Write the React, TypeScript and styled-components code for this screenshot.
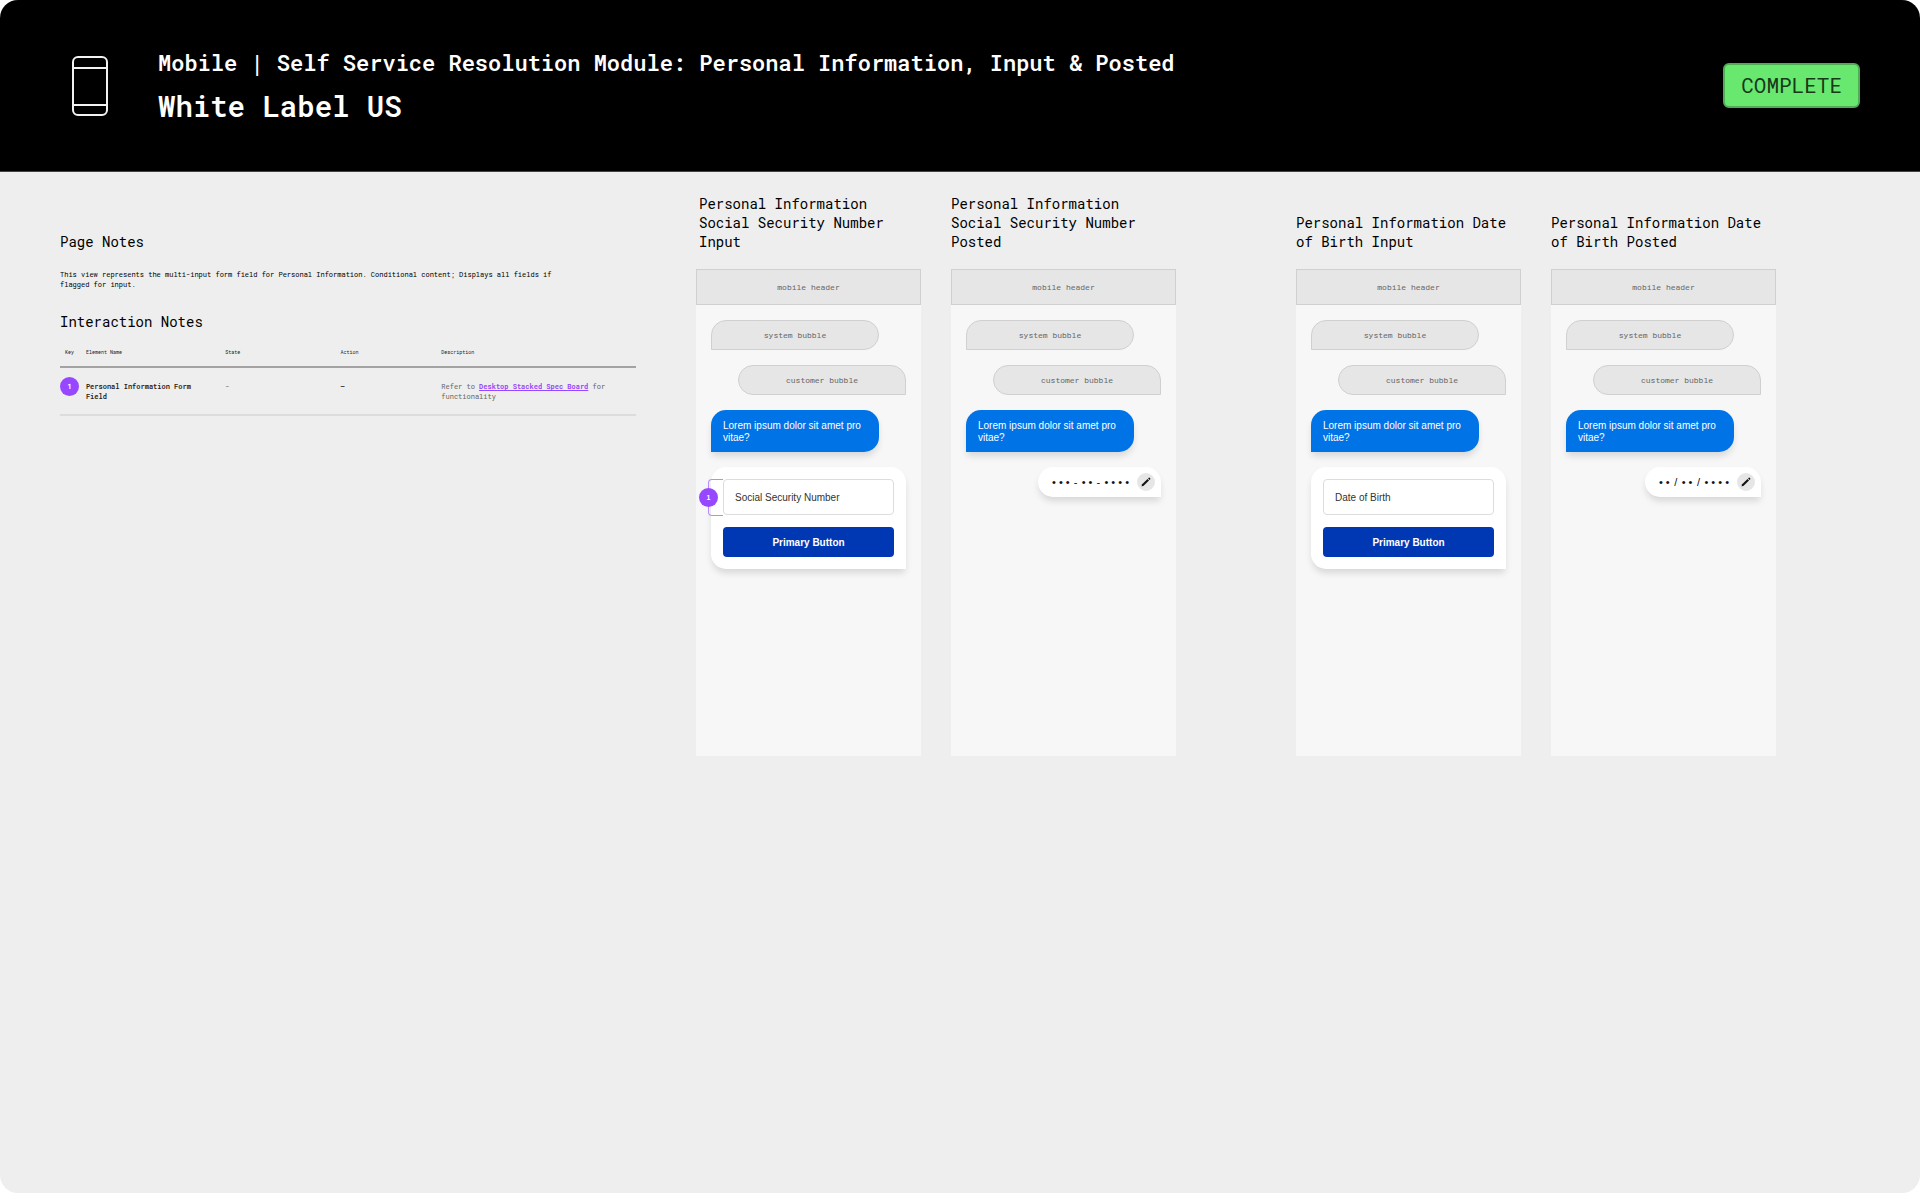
import React from "react";
import styled, { createGlobalStyle, css } from "styled-components";

const mono = `"Roboto Mono", "DejaVu Sans Mono", "Liberation Mono", monospace`;
const sans = `"Liberation Sans", Arial, sans-serif`;

const color = {
  board: "#eeeeee",
  ink: "#000000",
  purple: "#9747ff",
  purpleSoft: "#b98aff",
  wire: "#e6e6e6",
  wireBorder: "#d0d0d0",
  wireText: "#666666",
  screen: "#f7f7f7",
  blue: "#0073e6",
  navy: "#0038b3",
};

const GlobalStyle = createGlobalStyle`
  *, *::before, *::after { box-sizing: border-box; }
  body { margin: 0; background: #ffffff; font-family: ${mono}; color: ${color.ink}; }
  h1, h2, h3, p { margin: 0; font-weight: 400; }
`;

const Board = styled.div`
  display: flex;
  flex-direction: column;
  min-height: 100vh;
  border-radius: 18px;
  overflow: hidden;
  background: ${color.board};
`;

const Header = styled.header`
  display: flex;
  align-items: center;
  padding: 45px 60px;
  background: #000000;
  border-bottom: 1px solid #444444;
  color: #ffffff;
`;

const DeviceSlot = styled.div`
  display: flex;
  justify-content: center;
  width: 60px;
  margin-right: 38px;
`;

const Titles = styled.div`
  flex: 1;
  display: flex;
  flex-direction: column;
  gap: 5px;
`;

const Title = styled.p`
  font-size: 22px;
  line-height: 36px;
  font-weight: 600;
`;

const Subtitle = styled.h1`
  font-size: 29px;
  line-height: 40px;
  font-weight: 600;
`;

const Status = styled.span`
  padding: 8px 16px;
  border: 2px solid #4fae53;
  border-radius: 6px;
  background: #69e86f;
  color: #17391a;
  font-size: 21px;
  line-height: 25px;
`;

const Main = styled.main`
  display: flex;
  align-items: flex-start;
  gap: 60px;
  padding: 22px 144px 60px 60px;
`;

const Notes = styled.section`
  flex: 1;
  min-width: 0;
  padding-top: 38px;
`;

const SectionTitle = styled.h2`
  font-size: 14px;
  line-height: 20px;
`;

const Paragraph = styled.p`
  max-width: 516px;
  padding: 18px 0 22px;
  font-size: 7px;
  line-height: 10px;
`;

const Table = styled.table`
  width: 100%;
  margin-top: 11px;
  border-collapse: collapse;
  table-layout: fixed;
  text-align: left;
`;

const Col = styled.col<{ $share: number }>`
  width: ${(p) => p.$share}%;
`;

const HeadCell = styled.th<{ $inset?: boolean }>`
  height: 24px;
  padding: 0 0 5px ${(p) => (p.$inset ? 5 : 0)}px;
  border-bottom: 2px solid #a3a3a3;
  color: #222222;
  font-size: 5px;
  line-height: 8px;
  font-weight: 400;
`;

const Cell = styled.td<{ $tone?: "strong" | "dim" }>`
  padding: 14px 0 12px;
  border-bottom: 2px solid #dcdcdc;
  color: ${(p) => (p.$tone === "strong" ? "#222222" : "#666666")};
  font-size: 7px;
  line-height: 10px;
  font-weight: ${(p) => (p.$tone === "strong" ? 600 : 400)};
  vertical-align: top;
`;

const KeyCell = styled(Cell)`
  padding: 9px 0 0;
`;

const Marker = styled.span`
  display: flex;
  align-items: center;
  justify-content: center;
  width: 19px;
  height: 19px;
  border-radius: 50%;
  background: ${color.purple};
  color: #ffffff;
  font-family: ${mono};
  font-size: 7px;
  line-height: 10px;
  font-weight: 700;
`;

const SpecLink = styled.a`
  color: ${color.purple};
  font-weight: 700;
  text-decoration: underline;
`;

const Flows = styled.div`
  display: flex;
  align-items: flex-end;
  gap: 120px;
`;

const Flow = styled.section`
  display: flex;
  align-items: flex-end;
  gap: 30px;
`;

const Step = styled.article`
  width: 225px;
`;

const StepTitle = styled.h3<{ $inset?: boolean }>`
  margin-bottom: 18px;
  padding-left: ${(p) => (p.$inset ? 3 : 0)}px;
  font-size: 14px;
  line-height: 19px;
`;

const Screen = styled.div`
  min-height: 487px;
  background: ${color.screen};
`;

const wireframe = css`
  display: flex;
  align-items: center;
  justify-content: center;
  border: 1px solid ${color.wireBorder};
  background: ${color.wire};
  color: ${color.wireText};
  font-size: 8px;
  line-height: 12px;
`;

const ScreenHeader = styled.div`
  ${wireframe}
  height: 36px;
`;

const Conversation = styled.div`
  display: flex;
  flex-direction: column;
  gap: 15px;
  padding: 15px;
`;

type Side = "system" | "customer";

const bubbleShape = css<{ $side: Side }>`
  align-self: ${(p) => (p.$side === "system" ? "flex-start" : "flex-end")};
  border-radius: ${(p) =>
    p.$side === "system" ? "15px 15px 15px 0" : "15px 15px 0 15px"};
`;

const raised = css`
  box-shadow: 0 5px 7px -1px rgba(0, 0, 0, 0.13);
`;

const WireBubble = styled.div<{ $side: Side }>`
  ${wireframe}
  ${bubbleShape}
  width: 168px;
  height: 30px;
`;

const Prompt = styled.p<{ $side: Side }>`
  ${bubbleShape}
  ${raised}
  width: 168px;
  padding: 10px 12px 8px;
  background: ${color.blue};
  color: #ffffff;
  font-family: ${sans};
  font-size: 10px;
  line-height: 12px;
`;

const FormCard = styled.form<{ $side: Side }>`
  ${bubbleShape}
  ${raised}
  display: flex;
  flex-direction: column;
  gap: 12px;
  width: 195px;
  padding: 12px;
  background: #ffffff;
`;

const FieldWrap = styled.div`
  position: relative;
  display: flex;
`;

const Field = styled.input`
  width: 100%;
  height: 36px;
  padding: 0 11px;
  border: 1px solid #dddddd;
  border-radius: 4px;
  background: #ffffff;
  color: #333333;
  font-family: ${sans};
  font-size: 10px;

  &::placeholder {
    color: #333333;
    opacity: 1;
  }
`;

const Callout = styled.span`
  position: absolute;
  top: 0;
  bottom: -1px;
  right: 100%;
  display: flex;
  align-items: center;
  width: 15px;
  border: 1px solid ${color.purpleSoft};
  border-right: 0;
  border-radius: 4px 0 0 4px;

  ${Marker} {
    flex: none;
    margin-left: -10px;
    font-family: ${sans};
  }
`;

const PrimaryButton = styled.button`
  height: 30px;
  border: 0;
  border-radius: 4px;
  background: ${color.navy};
  color: #ffffff;
  font-family: ${sans};
  font-size: 10px;
  font-weight: 700;
`;

const Posted = styled.div<{ $side: Side }>`
  ${bubbleShape}
  ${raised}
  display: flex;
  align-items: center;
  gap: 8px;
  height: 30px;
  padding: 0 6px 0 14px;
  background: #ffffff;
`;

const Mask = styled.span`
  display: flex;
  gap: 4px;
  color: #111111;
  font-family: ${sans};
  font-size: 11px;
  line-height: 12px;
`;

const MaskPart = styled.span`
  min-width: 4px;
  text-align: center;
`;

const EditButton = styled.button`
  display: flex;
  align-items: center;
  justify-content: center;
  width: 18px;
  height: 18px;
  padding: 0;
  border: 0;
  border-radius: 50%;
  background: ${color.wire};
  color: #111111;
`;

const PhoneIcon = () => (
  <svg width="36" height="60" viewBox="0 0 36 60" fill="none" stroke="#f2f2f2" strokeWidth="2" aria-hidden="true">
    <rect x="1" y="1" width="34" height="58" rx="5" />
    <path d="M1 12H35M1 49H35" />
  </svg>
);

const PencilIcon = () => (
  <svg width="10" height="10" viewBox="0 0 20 20" fill="currentColor" aria-hidden="true">
    <path d="M1 19l1.300-4.300L13 4l3 3L5.300 17.700z" />
    <path d="M14.200 2.800l1.300-1.300a1.200 1.200 0 0 1 1.700 0l1.300 1.300a1.200 1.200 0 0 1 0 1.700l-1.300 1.300z" />
  </svg>
);

type StepData = {
  id: string;
  title: string;
  field?: string;
  marker?: string;
  mask?: string[];
};

const flows: StepData[][] = [
  [
    {
      id: "ssn-input",
      title: "Personal Information Social Security Number Input",
      field: "Social Security Number",
      marker: "1",
    },
    {
      id: "ssn-posted",
      title: "Personal Information Social Security Number Posted",
      mask: ["• • •", "-", "• •", "-", "• • • •"],
    },
  ],
  [
    {
      id: "dob-input",
      title: "Personal Information Date of Birth Input",
      field: "Date of Birth",
    },
    {
      id: "dob-posted",
      title: "Personal Information Date of Birth Posted",
      mask: ["• •", "/", "• •", "/", "• • • •"],
    },
  ],
];

const columns = [
  { label: "Key", share: 4.5 },
  { label: "Element Name", share: 24.2 },
  { label: "State", share: 20 },
  { label: "Action", share: 17.5 },
  { label: "Description", share: 33.8 },
];

const StepView = ({ step }: { step: StepData }) => (
  <Step>
    <StepTitle $inset={Boolean(step.marker)}>{step.title}</StepTitle>
    <Screen>
      <ScreenHeader>mobile header</ScreenHeader>
      <Conversation>
        <WireBubble $side="system">system bubble</WireBubble>
        <WireBubble $side="customer">customer bubble</WireBubble>
        <Prompt $side="system">Lorem ipsum dolor sit amet pro vitae?</Prompt>
        {step.field && (
          <FormCard $side="customer" onSubmit={(e) => e.preventDefault()}>
            <FieldWrap>
              <Field id={step.id} aria-label={step.field} placeholder={step.field} />
              {step.marker && (
                <Callout>
                  <Marker>{step.marker}</Marker>
                </Callout>
              )}
            </FieldWrap>
            <PrimaryButton type="submit">Primary Button</PrimaryButton>
          </FormCard>
        )}
        {step.mask && (
          <Posted $side="customer">
            <Mask>
              {step.mask.map((part, i) => (
                <MaskPart key={i}>{part}</MaskPart>
              ))}
            </Mask>
            <EditButton type="button" aria-label="Edit">
              <PencilIcon />
            </EditButton>
          </Posted>
        )}
      </Conversation>
    </Screen>
  </Step>
);

export default function App() {
  return (
    <Board>
      <GlobalStyle />
      <Header>
        <DeviceSlot>
          <PhoneIcon />
        </DeviceSlot>
        <Titles>
          <Title>Mobile | Self Service Resolution Module: Personal Information, Input &amp; Posted</Title>
          <Subtitle>White Label US</Subtitle>
        </Titles>
        <Status>COMPLETE</Status>
      </Header>
      <Main>
        <Notes>
          <SectionTitle>Page Notes</SectionTitle>
          <Paragraph>
            This view represents the multi-input form field for Personal Information. Conditional content; Displays all
            fields if flagged for input.
          </Paragraph>
          <SectionTitle>Interaction Notes</SectionTitle>
          <Table>
            <colgroup>
              {columns.map((c) => (
                <Col key={c.label} $share={c.share} />
              ))}
            </colgroup>
            <thead>
              <tr>
                {columns.map((c, i) => (
                  <HeadCell key={c.label} scope="col" $inset={i === 0}>
                    {c.label}
                  </HeadCell>
                ))}
              </tr>
            </thead>
            <tbody>
              <tr>
                <KeyCell>
                  <Marker>1</Marker>
                </KeyCell>
                <Cell $tone="strong">
                  Personal Information Form
                  <br />
                  Field
                </Cell>
                <Cell>-</Cell>
                <Cell $tone="strong">–</Cell>
                <Cell>
                  Refer to <SpecLink href="#desktop-stacked">Desktop Stacked Spec Board</SpecLink> for
                  <br />
                  functionality
                </Cell>
              </tr>
            </tbody>
          </Table>
        </Notes>
        <Flows>
          {flows.map((steps) => (
            <Flow key={steps[0].id}>
              {steps.map((step) => (
                <StepView key={step.id} step={step} />
              ))}
            </Flow>
          ))}
        </Flows>
      </Main>
    </Board>
  );
}
